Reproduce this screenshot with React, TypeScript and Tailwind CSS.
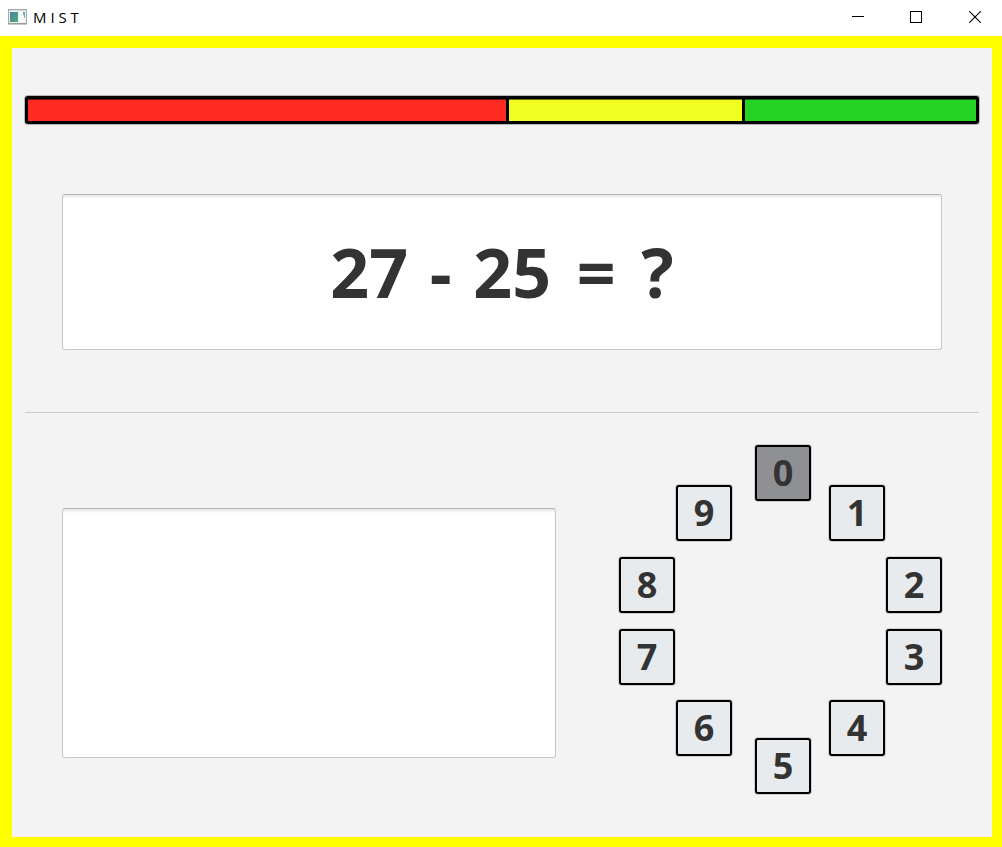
const digits = [
  { value: 0, place: "col-start-3 row-start-1" },
  { value: 1, place: "col-start-4 row-start-2" },
  { value: 2, place: "col-start-5 row-start-3" },
  { value: 3, place: "col-start-5 row-start-4" },
  { value: 4, place: "col-start-4 row-start-5" },
  { value: 5, place: "col-start-3 row-start-6" },
  { value: 6, place: "col-start-2 row-start-5" },
  { value: 7, place: "col-start-1 row-start-4" },
  { value: 8, place: "col-start-1 row-start-3" },
  { value: 9, place: "col-start-2 row-start-2" },
];

const panel =
  "rounded-[3px] border border-[#c8c8c8] border-t-[#b5b5b5] bg-white shadow-[inset_0_3px_3px_-1px_rgba(0,0,0,0.1)]";

function AppIcon() {
  return (
    <svg width="19" height="16" viewBox="0 0 19 16" aria-hidden="true">
      <defs>
        <linearGradient id="screen" x1="0" y1="0" x2="1" y2="1">
          <stop offset="0" stopColor="#4a7fa5" />
          <stop offset="1" stopColor="#4fae79" />
        </linearGradient>
        <linearGradient id="gauge" x1="0" y1="0" x2="0" y2="1">
          <stop offset="0" stopColor="#5b9fd0" />
          <stop offset="1" stopColor="#6cc79a" />
        </linearGradient>
      </defs>
      <rect x="0.5" y="0.5" width="18" height="14" fill="#f1f1f1" stroke="#a9a9ac" />
      <path d="M0 15h19" stroke="#8f9094" />
      <path d="M1 1.5h17" stroke="#d9dadd" />
      <rect x="2" y="3" width="8" height="10" fill="url(#screen)" />
      <rect x="11" y="3" width="6" height="10" fill="#fafafa" />
      <path d="M15 3h2v6h-1v-3h-1z" fill="url(#gauge)" />
    </svg>
  );
}

function TitleBar() {
  return (
    <header className="flex h-9 items-center bg-white pb-0.5 pl-2 text-black">
      <AppIcon />
      <h1 className="ml-1.5 flex-1 text-[15px] leading-5">M I S T</h1>
      <button type="button" aria-label="Minimize" className="flex h-8 w-[58px] items-center justify-center">
        <svg width="12" height="12" viewBox="0 0 12 12" shapeRendering="crispEdges">
          <path d="M0 5.5h12" stroke="#000" />
        </svg>
      </button>
      <button type="button" aria-label="Maximize" className="flex h-8 w-[58px] items-center justify-center">
        <svg width="12" height="12" viewBox="0 0 12 12" shapeRendering="crispEdges">
          <rect x="0.5" y="0.5" width="11" height="11" fill="none" stroke="#000" />
        </svg>
      </button>
      <button type="button" aria-label="Close" className="flex h-8 w-[57px] items-center justify-end pr-[21px]">
        <svg width="12" height="12" viewBox="0 0 12 12">
          <path d="M0.3 0.3l11.4 11.4M11.7 0.3L0.3 11.7" stroke="#000" strokeWidth="1.1" />
        </svg>
      </button>
    </header>
  );
}

function PerformanceBar() {
  const segment = "shadow-[inset_0_1px_0_rgba(0,0,0,0.55)]";
  return (
    <div
      role="img"
      aria-label="Performance scale"
      className="grid h-7 grid-cols-[477fr_232fr_231fr] gap-[3px] rounded-[3px] border-[3px] border-black bg-black shadow-[0_0_0_1px_rgba(0,0,0,0.25)]"
    >
      <div className={`${segment} bg-[#ff2a22]`} />
      <div className={`${segment} bg-[#f1ff20]`} />
      <div className={`${segment} bg-[#25d325]`} />
    </div>
  );
}

function Dial() {
  return (
    <div
      role="group"
      aria-label="Answer"
      className="grid shrink-0 grid-cols-[57px_79px_74px_57px_56px] grid-rows-[40px_72px_72px_71px_38px_56px]"
    >
      {digits.map(({ value, place }) => (
        <button
          key={value}
          type="button"
          className={`${place} ${
            value === 0 ? "bg-[#8f9094]" : "bg-[#e7ebee]"
          } flex size-14 items-center justify-center rounded-[3px] border-2 border-black text-4xl font-bold shadow-[0_0_0_1px_rgba(0,0,0,0.15)]`}
        >
          {value}
        </button>
      ))}
    </div>
  );
}

export default function App() {
  return (
    <div className="flex min-h-screen flex-col font-['Open_Sans','Noto_Sans',sans-serif] text-[#333333]">
      <TitleBar />
      <main className="flex flex-1 flex-col border-12 border-r-10 border-b-10 border-[#ffff00] bg-[#f3f3f3] px-[13px]">
        <section className="border-b border-[#cbcbcb] pt-[48px] pb-[62px]">
          <PerformanceBar />
          <div className={`${panel} mx-[37px] mt-[70px] flex h-[156px] items-center justify-center`}>
            <p className="text-[68px] leading-none font-bold">
              27 <span className="mx-1">-</span> 25 <span className="mx-2">=</span> ?
            </p>
          </div>
        </section>
        <section className="flex items-start gap-[63px] px-[37px] pt-8 pb-10">
          <textarea
            aria-label="Feedback"
            readOnly
            className={`${panel} mt-[63px] h-[250px] min-w-0 flex-1 resize-none p-3 text-2xl`}
          />
          <Dial />
        </section>
      </main>
    </div>
  );
}
